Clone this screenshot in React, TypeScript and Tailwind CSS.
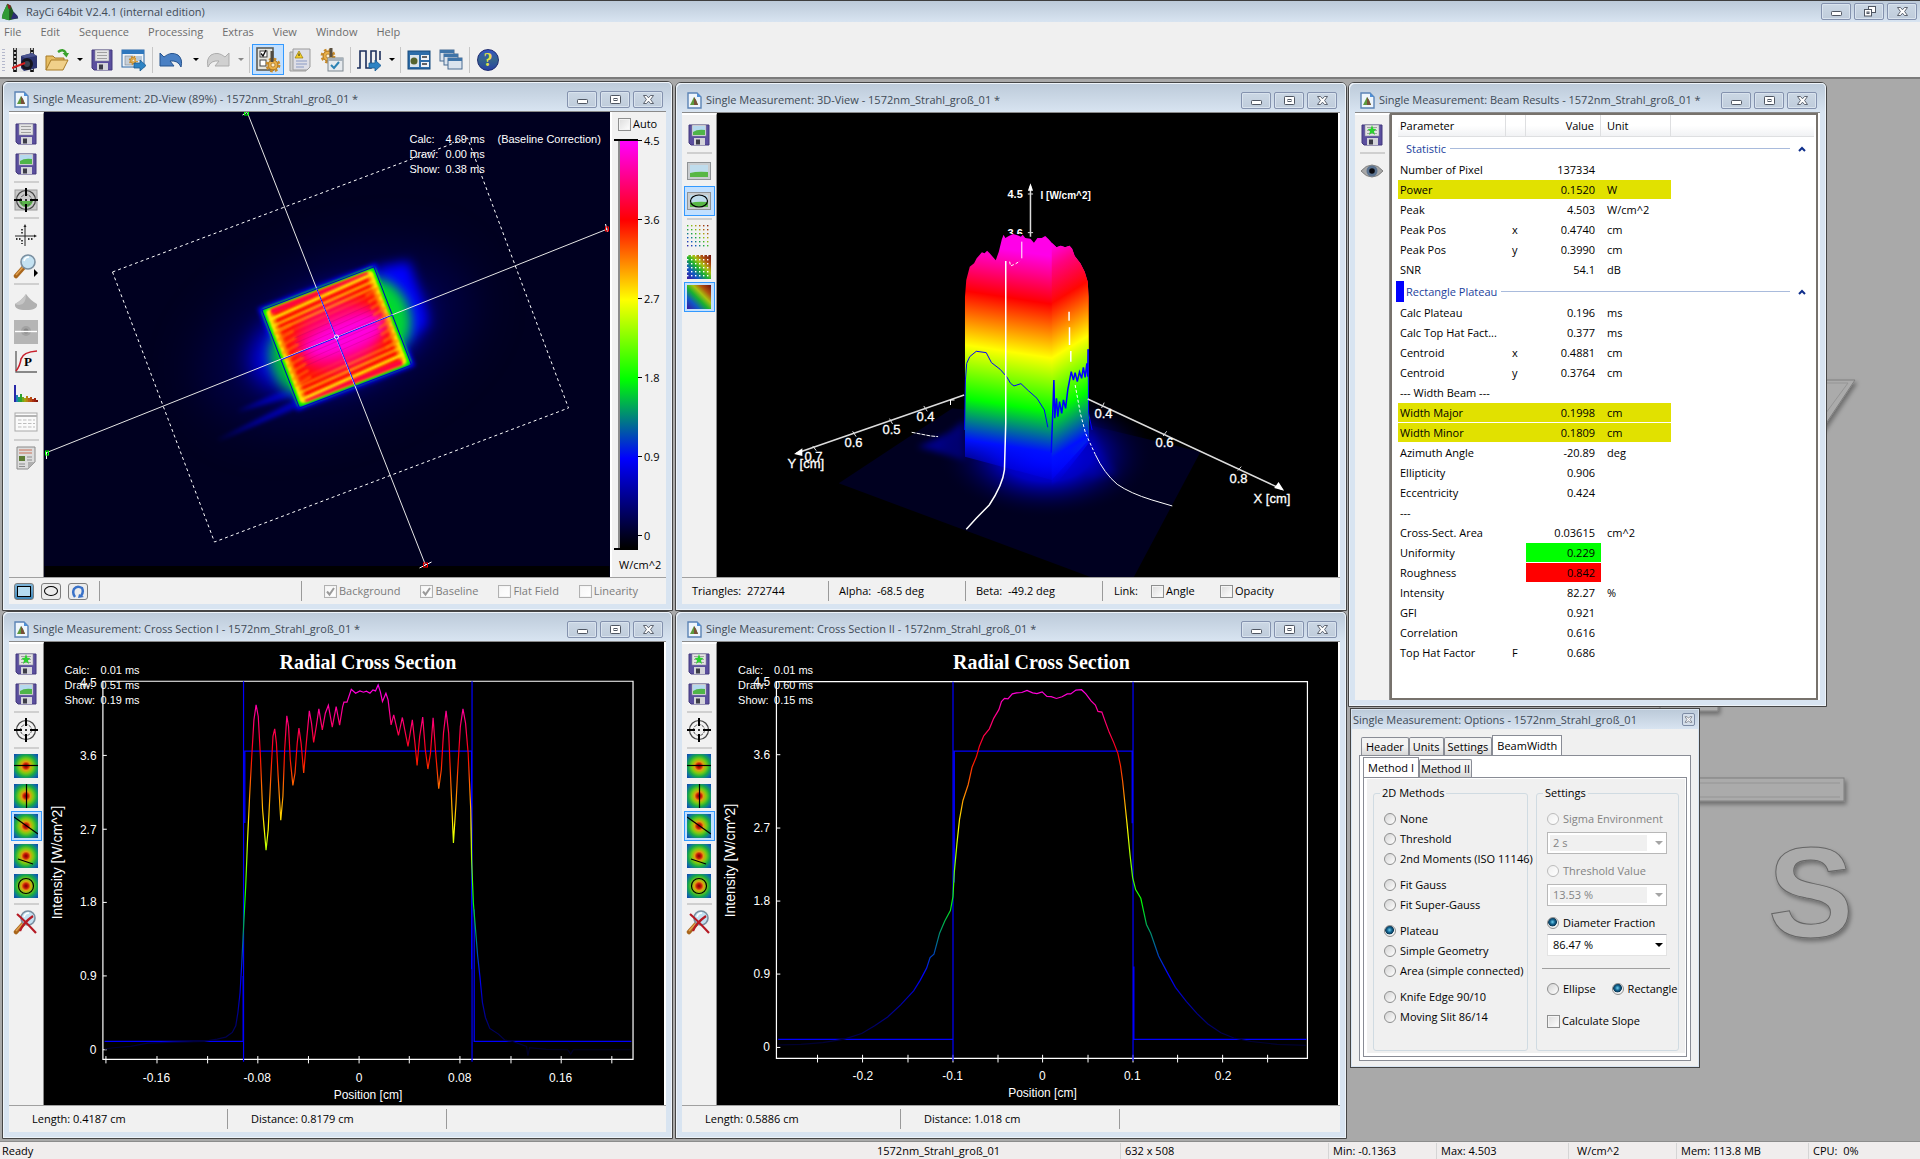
import React from "react";

const UI = "font-['Open_Sans','Noto_Sans',sans-serif]";

/* ---------- small drawings ---------- */

function AppCone({ size = 22 }: { size?: number }) {
  return (
    <svg width={size} height={size} viewBox="0 0 22 22" aria-hidden="true">
      <path d="M8 2 L12 4 L15 11 L19 15 L20 18 L10 20 L2 18 L3 13 Z" fill="#1f5a22" />
      <path d="M8 2 L10 9 L10 20 L2 18 L3 13 Z" fill="#2f9a35" />
      <path d="M15 11 L19 15 L20 18 L12 19 Z" fill="#2c2c74" />
      <path d="M8 2 L12 4 L11 8 L9 7 Z" fill="#8a2020" />
    </svg>
  );
}

function DocIcon() {
  return (
    <svg width="15" height="17" viewBox="0 0 15 17" aria-hidden="true">
      <path d="M1 1 H10 L14 5 V16 H1 Z" fill="#eef5fc" stroke="#5b83b5" strokeWidth="1.4" />
      <path d="M10 1 V5 H14 Z" fill="#4f90d8" />
      <path d="M7 5 L9 8 L11 13 L3 13 L5 9 Z" fill="#5d9a3c" />
      <path d="M7 5 L9 8 L11 13 L7 13 Z" fill="#7a4f38" />
    </svg>
  );
}

function Floppy({ kind = "lines" }: { kind?: "lines" | "pic" | "star" }) {
  return (
    <svg width="22" height="22" viewBox="0 0 22 22" aria-hidden="true">
      <path d="M1 1 H21 V21 H3 L1 19 Z" fill="#5b4f9e" stroke="#43397c" />
      <rect x="4" y="1" width="14" height="11" fill="#e4e4e4" stroke="#8d8d9d" strokeWidth=".6" />
      {kind !== "pic" && <path d="M6 3.5H16M6 6.5H16M6 9.5H16" stroke="#a0a0a0" />}
      {kind === "pic" && (
        <>
          <rect x="5" y="2" width="12" height="9" fill="#b6d9ee" />
          <path d="M5 8 Q9 5 17 6 V11 H5 Z" fill="#4fb549" />
        </>
      )}
      {kind === "star" && (
        <path d="M11 1 L12.3 4.8 L15.5 5 L13 7.2 L14 11 L11 8.8 L8 11 L9 7.2 L6.5 5 L9.7 4.8 Z" fill="#2bd12f" />
      )}
      <rect x="6" y="14" width="11" height="7" fill="#d4d4da" />
      <rect x="8" y="15.5" width="4" height="5" fill="#3c3c48" />
    </svg>
  );
}

function Film() {
  return (
    <svg width="26" height="26" viewBox="0 0 26 26" aria-hidden="true">
      <rect x="1" y="1" width="21" height="24" fill="#e2e2e2" />
      <path d="M3 1V25M20 1V25" stroke="#111" strokeWidth="3.600" />
      <path d="M3 1V25M20 1V25" stroke="#eee" strokeWidth="1.6" strokeDasharray="2 2" />
      <path d="M9 9 L20 6 L25 9 V21 L12 24 L9 21 Z" fill="#2b3370" />
      <path d="M9 9 L20 6 L25 9 L13 11 Z" fill="#4a5490" />
      <circle cx="15" cy="17" r="6" fill="#15151f" />
      <circle cx="15" cy="17" r="3" fill="#3c4252" />
      <path d="M0 21 L13 16" stroke="#d81e1e" strokeWidth="2" />
    </svg>
  );
}

function Folder() {
  return (
    <svg width="26" height="24" viewBox="0 0 26 24" aria-hidden="true">
      <path d="M2 22 V8 H9 L11 10 H20 V13" fill="#e6bd62" stroke="#a77b26" />
      <path d="M2 22 L7 12 H24 L19 22 Z" fill="#f0d08a" stroke="#a77b26" />
      <path d="M14 4 Q19 0 22 5" fill="none" stroke="#3aa22d" strokeWidth="2.4" />
      <path d="M18.500 5 H25 L22.500 9.500 Z" fill="#3aa22d" />
    </svg>
  );
}

function GearShape({ x = 0, y = 0 }: { x?: number; y?: number }) {
  return (
    <g transform={`translate(${x} ${y})`}>
      <circle r="5" fill="#e9b04a" stroke="#a56d15" />
      <circle r="6.200" fill="none" stroke="#c88a28" strokeWidth="2.4" strokeDasharray="2.600 2.270" />
      <circle r="2" fill="#fbeed0" stroke="#a56d15" strokeWidth=".7" />
    </g>
  );
}

function ExportWin() {
  return (
    <svg width="26" height="24" viewBox="0 0 26 24" aria-hidden="true">
      <rect x="1" y="2" width="22" height="17" fill="#eef3f8" stroke="#2a66a5" />
      <rect x="1" y="2" width="22" height="4" fill="#2f77bd" />
      <rect x="4" y="8" width="8" height="9" fill="#c7cfd8" stroke="#7a8592" strokeWidth=".6" />
      <g transform="scale(.62)">
        <GearShape x={20} y={20} />
      </g>
      <rect x="15" y="8" width="6" height="5" fill="#b9c9da" />
      <path d="M13 15 H19 V12 L25 17.500 L19 23 V20 H13 Z" fill="#2d83c4" stroke="#195a90" strokeWidth=".8" />
    </svg>
  );
}

function Undo({ off = false }: { off?: boolean }) {
  const fill = off ? "#d0d0d0" : "#4a80c4";
  const stroke = off ? "#adadad" : "#27548f";
  return (
    <svg width="24" height="20" viewBox="0 0 24 20" aria-hidden="true">
      <g transform={off ? "translate(24 0) scale(-1 1)" : undefined}>
        <path d="M1 3 L5 7 Q12 1 19 5 Q24 9 22 17 Q19 10 11 11 L15 16 H1 Z" fill={fill} stroke={stroke} />
      </g>
    </svg>
  );
}

function ChecksGear() {
  return (
    <svg width="26" height="26" viewBox="0 0 26 26" aria-hidden="true">
      <rect x="2" y="1" width="16" height="22" fill="#e4e4de" stroke="#5d5d58" strokeWidth="1.6" />
      <rect x="5" y="4" width="7" height="6" fill="#fff" stroke="#444" />
      <rect x="5" y="13" width="6" height="6" fill="#fff" stroke="#444" />
      <path d="M6 6.500 L8 9 L11 3" fill="none" stroke="#111" strokeWidth="1.400" />
      <GearShape x={18} y={18} />
      <path d="M17 4V15" stroke="#4f4a40" strokeWidth="3" />
    </svg>
  );
}

function DocWarn() {
  return (
    <svg width="24" height="24" viewBox="0 0 24 24" aria-hidden="true">
      <path d="M2 4 H18 V23 H2 Z" fill="#d0d0d0" stroke="#9b9b9b" />
      <path d="M5 1 H22 V19 L19 22 H5 Z" fill="#dedee6" stroke="#9b9b9b" />
      <path d="M11 3 L15 10 H7 Z" fill="#f4cf2a" stroke="#9a7c08" strokeWidth=".7" />
      <path d="M11 5.500 V8" stroke="#222" />
      <path d="M8 13H19M8 16H19M8 19H16" stroke="#8a9ac4" />
    </svg>
  );
}

function GearCheck() {
  return (
    <svg width="24" height="24" viewBox="0 0 24 24" aria-hidden="true">
      <GearShape x={8} y={8} />
      <path d="M11 0V9" stroke="#5b5040" strokeWidth="3" />
      <rect x="8" y="10" width="15" height="13" fill="#e6eaee" stroke="#7c8790" />
      <rect x="8" y="10" width="15" height="3" fill="#a6b1bb" />
      <path d="M11 17 L14 20 L19 14" fill="none" stroke="#2d83b4" strokeWidth="2" />
    </svg>
  );
}

function Pulses() {
  return (
    <svg width="26" height="24" viewBox="0 0 26 24" aria-hidden="true">
      <path d="M1 20 H4 V3 H10 V20 H15 V3 H20 V14 M24 3 V12" fill="none" stroke="#1c2f5c" strokeWidth="1.600" />
      <path d="M13 15 H19 V12 L25 17.500 L19 23 V20 H13 Z" fill="#2d83c4" stroke="#195a90" strokeWidth=".8" />
    </svg>
  );
}

function TileWins() {
  return (
    <svg width="24" height="20" viewBox="0 0 24 20" aria-hidden="true">
      <rect x="1" y="1" width="22" height="18" fill="#2d6da9" stroke="#174a7d" />
      <rect x="3" y="5" width="9" height="12" fill="#dbe4ec" />
      <circle cx="7" cy="11" r="3.500" fill="#56642f" />
      <rect x="14" y="5" width="8" height="5" fill="#eef2f6" />
      <rect x="14" y="12" width="8" height="5" fill="#eef2f6" />
      <path d="M15 7H20M15 14H20" stroke="#333" strokeWidth="1.500" />
    </svg>
  );
}

function Cascade() {
  return (
    <svg width="24" height="24" viewBox="0 0 24 24" aria-hidden="true">
      {[0, 4, 8].map((o) => (
        <g key={o}>
          <rect x={1 + o} y={2 + o} width="14" height="11" fill="#dbe4ee" stroke="#4b6d92" />
          <rect x={1 + o} y={2 + o} width="14" height="3" fill="#3f74a8" />
        </g>
      ))}
    </svg>
  );
}

function Help() {
  return (
    <span className="flex h-[22px] w-[22px] items-center justify-center rounded-full border border-[#1e2c70] bg-linear-to-b from-[#3350c4] via-[#35648c] to-[#2a3fa4] font-['Liberation_Serif',serif] text-[18px] leading-none font-bold text-[#e4e04a]">
      ?
    </span>
  );
}

function Target({ pic = false }: { pic?: boolean }) {
  return (
    <svg width="24" height="24" viewBox="0 0 24 24" aria-hidden="true">
      {pic && (
        <>
          <rect x="1" y="2" width="22" height="20" fill="#c9c9c9" stroke="#9a9a9a" />
          <path d="M5 13 H19 Q17 19 12 19 Q7 19 5 13Z" fill="#59b648" />
        </>
      )}
      <circle cx="12" cy="12" r="9.500" fill="none" stroke="#444" strokeWidth="1.200" />
      <circle cx="12" cy="12" r="5.500" fill="none" stroke="#555" strokeWidth="1" strokeDasharray="3 1" />
      <path d="M12 0V8M12 16V24M0 12H8M16 12H24" stroke="#000" strokeWidth="2" />
      <circle cx="12" cy="12" r="1" fill="#000" />
    </svg>
  );
}

function Axes() {
  return (
    <svg width="24" height="24" viewBox="0 0 24 24" aria-hidden="true">
      <path d="M1 12H21M11 2V22" stroke="#222" />
      <path d="M20 10.500 L23 12 L20 13.500ZM9.500 3 L11 0 L12.500 3Z" fill="#222" />
      <path d="M2 15H8M14 15H20M8 5V10M8 16V20" stroke="#333" strokeWidth="1.800" strokeDasharray="1.500 1.500" />
    </svg>
  );
}

function Loupe({ crossed = false }: { crossed?: boolean }) {
  return (
    <svg width="26" height="26" viewBox="0 0 26 26" aria-hidden="true">
      <path d="M3 23 L11 14" stroke="#a9661c" strokeWidth="4.500" strokeLinecap="round" />
      <path d="M3 22 L10 14" stroke="#e0a050" strokeWidth="1.500" />
      <circle cx="15" cy="9" r="7" fill="#c4e2f2" stroke="#7a8fa0" strokeWidth="1.600" />
      <path d="M11 8 Q12 4 16 4" stroke="#fff" strokeWidth="1.600" fill="none" />
      {!crossed && <path d="M21 16 L25 20 L21 24Z" fill="#000" />}
      {crossed && <path d="M4 5 Q12 12 23 24 M20 7 Q10 14 7 22" stroke="#b51a24" strokeWidth="2.200" fill="none" />}
    </svg>
  );
}

function Hill() {
  return (
    <svg width="24" height="18" viewBox="0 0 24 18" aria-hidden="true">
      <path d="M12 1 Q16 7 23 11 Q24 17 12 17 Q0 17 1 11 Q8 7 12 1Z" fill="#b0b0b0" />
      <path d="M12 1 Q8 7 1 11 Q12 15 12 1Z" fill="#c6c6c6" />
    </svg>
  );
}

function GraySpot() {
  return (
    <svg width="24" height="24" viewBox="0 0 24 24" aria-hidden="true">
      <rect width="24" height="24" fill="#b5b5b5" />
      <circle cx="12" cy="11" r="5" fill="#a2a2a2" />
      <circle cx="12" cy="11" r="2.500" fill="#858585" />
      <path d="M1 11.500H23" stroke="#fff" strokeWidth="1.400" />
    </svg>
  );
}

function PCurve() {
  return (
    <svg width="24" height="24" viewBox="0 0 24 24" aria-hidden="true">
      <path d="M2 1V22H23" fill="none" stroke="#666" strokeWidth="1.400" />
      <path d="M2 21 Q6 16 7 9 Q9 2 23 1" fill="none" stroke="#c8202c" strokeWidth="1.600" />
      <text x="10" y="16" fontSize="13" fontWeight="bold" fontFamily="Liberation Serif, serif">P</text>
    </svg>
  );
}

function Histogram() {
  const bars = [17, 7, 5, 8, 5, 4, 6, 4, 5, 3, 4, 2];
  const colors = ["#2828a8", "#1f7fb5", "#19a06a", "#2fa32c", "#72a81c", "#a8a010", "#b98212", "#bb6212", "#b84a12", "#a83010", "#98200e", "#80140c"];
  return (
    <svg width="24" height="20" viewBox="0 0 24 20" aria-hidden="true">
      {bars.map((h, i) => (
        <rect key={i} x={i * 2} y={20 - h} width="2" height={h} fill={colors[i]} />
      ))}
    </svg>
  );
}

function Sheet() {
  return (
    <svg width="24" height="20" viewBox="0 0 24 20" aria-hidden="true">
      <rect x="1" y="1" width="22" height="18" fill="#fafafa" stroke="#a9a9a9" />
      <path d="M1 4H23" stroke="#b5b5b5" strokeWidth="2" />
      <path d="M4 8H21M4 11.500H21M4 15H21" stroke="#bdbdbd" strokeDasharray="3.500 1.500" />
    </svg>
  );
}

function Report() {
  return (
    <svg width="20" height="24" viewBox="0 0 20 24" aria-hidden="true">
      <path d="M1 1 H19 V16 L12 23 H1 Z" fill="#dcdcdc" stroke="#8a8a8a" />
      <path d="M19 16 H12 V23Z" fill="#b0b0b0" />
      <path d="M3 4H16M3 7H16" stroke="#cf9484" strokeWidth="1.600" />
      <rect x="3" y="10" width="6" height="5" fill="#5c7c34" />
      <path d="M11 11H16M11 14H16M3 18H9M3 20.500H9" stroke="#8d8d8d" />
    </svg>
  );
}

function Picture({ oval = false }: { oval?: boolean }) {
  return (
    <svg width="24" height="18" viewBox="0 0 24 18" aria-hidden="true">
      <rect x=".5" y=".5" width="23" height="17" fill="#c9cdd0" stroke="#8f9396" />
      <rect x="3" y="3" width="18" height="12" fill="#bfdcec" />
      <path d="M3 11 Q10 9 21 10 V15 H3Z" fill="#58b745" />
      {oval && <ellipse cx="12" cy="9" rx="8.500" ry="6" fill="none" stroke="#000" strokeWidth="1.200" />}
    </svg>
  );
}

function Rainbow({ kind }: { kind: "dots" | "mesh" | "solid" }) {
  const id = `rainbow-${kind}`;
  return (
    <svg width="24" height="24" viewBox="0 0 24 24" aria-hidden="true">
      <defs>
        <linearGradient id={id} x1="0" y1="1" x2="1" y2="0">
          <stop offset="0" stopColor="#3a16a0" />
          <stop offset=".25" stopColor="#1158c4" />
          <stop offset=".45" stopColor="#18b030" />
          <stop offset=".62" stopColor="#a8c010" />
          <stop offset=".78" stopColor="#b05010" />
          <stop offset="1" stopColor="#701010" />
        </linearGradient>
        <pattern id={`${id}-p`} width="4" height="4" patternUnits="userSpaceOnUse">
          <rect width="1.400" height="1.400" fill="#fff" />
        </pattern>
        <mask id={`${id}-m`}>
          <rect width="24" height="24" fill={`url(#${id}-p)`} />
        </mask>
      </defs>
      <rect width="24" height="24" fill={`url(#${id})`} mask={kind === "dots" ? `url(#${id}-m)` : undefined} />
      {kind === "mesh" && <rect width="24" height="24" fill={`url(#${id}-p)`} />}
    </svg>
  );
}

function Spot({ mark }: { mark: string }) {
  return (
    <svg width="24" height="24" viewBox="0 0 24 24" aria-hidden="true">
      <defs>
        <radialGradient id="spot" r=".72">
          <stop offset="0" stopColor="#7a0000" />
          <stop offset=".14" stopColor="#c81808" />
          <stop offset=".26" stopColor="#e0a010" />
          <stop offset=".42" stopColor="#7ccc10" />
          <stop offset=".62" stopColor="#18a848" />
          <stop offset=".8" stopColor="#1070a0" />
          <stop offset="1" stopColor="#0c3cb4" />
        </radialGradient>
      </defs>
      <rect width="24" height="24" fill="url(#spot)" />
      <path d={mark} fill="none" stroke="#000" strokeWidth="1.200" />
    </svg>
  );
}

function Eye() {
  return (
    <svg width="22" height="14" viewBox="0 0 22 14" aria-hidden="true">
      <path d="M0 7 Q5 1 11 1 Q17 1 22 7 Q17 13 11 13 Q5 13 0 7Z" fill="#a8a8a8" stroke="#808080" />
      <circle cx="11" cy="7" r="5.500" fill="#5b7390" />
      <circle cx="11" cy="7" r="2.800" fill="#0a0a10" />
    </svg>
  );
}

/* ---------- window chrome ---------- */

type CtlKind = "min" | "max" | "restore" | "close";

function Ctl({ kind, small = false }: { kind: CtlKind; small?: boolean }) {
  return (
    <button
      type="button"
      aria-label={kind}
      className={
        small
          ? "flex h-[13px] w-[13px] items-center justify-center rounded-[2px] border border-[#7d8ca5] bg-[#d5dfea]"
          : "flex h-[17px] w-[30px] items-center justify-center rounded-[2px] border border-[#8492ae] bg-linear-to-b from-[#cbd7e4] to-[#bfccdb] shadow-[inset_0_0_0_1px_#d9e3ee]"
      }
    >
      <svg width={small ? 9 : 13} height={small ? 9 : 11} viewBox="0 0 13 11" aria-hidden="true" fill="#fff" stroke="#4f5662">
        {kind === "min" && <rect x="1.500" y="5.500" width="10" height="4" rx=".8" />}
        {kind === "max" && (
          <>
            <rect x="1.500" y="1.500" width="10" height="8" rx=".8" />
            <rect x="5" y="4.500" width="3" height="2" />
          </>
        )}
        {kind === "restore" && (
          <>
            <rect x="5.500" y=".5" width="7" height="6" />
            <rect x="1.500" y="3.500" width="7" height="6.500" />
            <rect x="4" y="6" width="2" height="1.500" />
          </>
        )}
        {kind === "close" && (
          <path d="M1.500 1.500 H4.500 L6.500 3.800 L8.500 1.500 H11.500 L8.600 5.500 L11.500 9.500 H8.500 L6.500 7.200 L4.500 9.500 H1.500 L4.400 5.500Z" strokeWidth=".9" />
        )}
      </svg>
    </button>
  );
}

function Win({ className, title, children }: { className: string; title: string; children: React.ReactNode }) {
  return (
    <section className={`absolute flex flex-col rounded-t-[6px] border border-[#454545] bg-[#d8e4f1] px-[6px] pb-[6px] shadow-[inset_0_0_0_1px_#eef4fa] ${className}`}>
      <header className="-mx-[6px] flex h-[29px] shrink-0 items-center rounded-t-[5px] bg-linear-to-b from-[#bccad9] to-[#d8e4f1] px-[9px] pt-[5px] shadow-[inset_1px_1px_0_#eef4fa,inset_-1px_0_0_#eef4fa]">
        <span className="flex min-w-0 flex-1 items-center gap-[4px] pl-[2px]">
          <DocIcon />
          <h2 className={`${UI} truncate text-[11px] leading-4 text-[#404a56]`}>{title}</h2>
        </span>
        <span className="flex gap-[3px]">
          <Ctl kind="min" />
          <Ctl kind="max" />
          <Ctl kind="close" />
        </span>
      </header>
      <div className="flex min-h-0 flex-1 flex-col border-t border-[#8a8a8a] bg-[#f1f1f1]">{children}</div>
    </section>
  );
}

type Tool = { name: string; icon: React.ReactNode; on?: boolean; rule?: boolean };

function SideBar({ tools }: { tools: Tool[] }) {
  return (
    <nav className="flex w-[35px] shrink-0 flex-col items-center border-t-2 border-r border-t-white border-r-[#8a8a8a] pt-[5px]">
      {tools.map((t) => (
        <React.Fragment key={t.name}>
          <button
            type="button"
            aria-label={t.name}
            className={
              t.on
                ? "flex h-[30px] w-[31px] items-center justify-center border border-[#3399ff] bg-[#c2e0ff]"
                : "flex h-[30px] w-[31px] items-center justify-center"
            }
          >
            {t.icon}
          </button>
          {t.rule && <span className="my-[2px] h-[2px] w-[25px] bg-[#cfcfcf]" />}
        </React.Fragment>
      ))}
    </nav>
  );
}

function Check({ label, checked = false, disabled = false }: { label: string; checked?: boolean; disabled?: boolean }) {
  return (
    <label className={disabled ? "flex items-center gap-[2px] text-[#7c7c7c]" : "flex items-center gap-[2px]"}>
      <span className="relative flex">
        <input
          type="checkbox"
          defaultChecked={checked}
          disabled={disabled}
          className="peer h-[13px] w-[13px] appearance-none border border-[#8e8f8f] bg-linear-to-br from-[#dcdcdc] to-white shadow-[inset_0_0_0_1px_#f4f4f4] disabled:border-[#b1b1b1] disabled:from-[#f6f6f6]"
        />
        <svg viewBox="0 0 13 13" className="pointer-events-none absolute inset-0 hidden h-[13px] w-[13px] peer-checked:block" aria-hidden="true">
          <path d="M3 6.500 L5.500 9.500 L10 3" fill="none" stroke="#9a9a9a" strokeWidth="2" />
        </svg>
      </span>
      {label}
    </label>
  );
}

/* ---------- colour scale shared by the plots ---------- */

function Spectrum() {
  return (
    <>
      <stop offset="0" stopColor="#ff00ff" />
      <stop offset=".2" stopColor="#ff0000" />
      <stop offset=".4" stopColor="#ffff00" />
      <stop offset=".6" stopColor="#00ff00" />
      <stop offset=".8" stopColor="#0000ff" />
      <stop offset="1" stopColor="#000028" />
    </>
  );
}

/* ---------- 2D view ---------- */

const stripes = [
  [-43, 1, 3], [-36, 0.9, 2], [-30, 0.7, 2], [-24, 0.4, 1], [-18, 0.2, 1],
  [24, 0.25, 1], [30, 0.5, 2], [36, 0.8, 2], [43, 1, 3],
];

function Beam2D() {
  return (
    <svg viewBox="45 112 565 465" className="block h-full w-full bg-[#000020]" role="img" aria-label="Beam profile">
      <defs>
        <filter id="b2" x="-50%" y="-50%" width="200%" height="200%"><feGaussianBlur stdDeviation="2" /></filter>
        <filter id="b1" x="-50%" y="-50%" width="200%" height="200%"><feGaussianBlur stdDeviation="1" /></filter>
        <filter id="b6" x="-50%" y="-50%" width="200%" height="200%"><feGaussianBlur stdDeviation="6" /></filter>
        <filter id="b14" x="-80%" y="-80%" width="260%" height="260%"><feGaussianBlur stdDeviation="12" /></filter>
        <filter id="b30" x="-80%" y="-80%" width="260%" height="260%"><feGaussianBlur stdDeviation="26" /></filter>
      </defs>
      <rect x="45" y="566" width="565" height="11" fill="#000" />
      <g transform="translate(337 337) rotate(-21)">
        <ellipse rx="140" ry="75" fill="#000070" opacity=".55" filter="url(#b30)" />
        <ellipse rx="90" ry="44" fill="#0000ff" filter="url(#b14)" />
        <path d="M60 -50 L95 -45 L90 20 L60 30Z" fill="#0000ff" filter="url(#b6)" />
        <rect x="-63" y="-55" width="126" height="110" fill="#0000ff" filter="url(#b2)" />
        <path d="M-60 44 L-150 54 L-60 52Z M-60 30 L-120 34 L-60 40Z" fill="#0000e0" filter="url(#b2)" opacity=".7" />
        <ellipse cx="50" cy="-4" rx="28" ry="38" fill="#00d830" filter="url(#b6)" />
        <ellipse cx="-52" cy="8" rx="20" ry="32" fill="#00b840" filter="url(#b6)" />
        <rect x="-61" y="-53" width="122" height="106" rx="5" fill="#00f000" filter="url(#b1)" />
        <rect x="-57" y="-50" width="114" height="100" rx="4" fill="#ffe800" filter="url(#b1)" />
        <rect x="-52" y="-48" width="104" height="96" rx="4" fill="#ff1000" filter="url(#b2)" />
        <path d="M-52 -47 H52 M-52 47 H52" stroke="#ff0040" strokeWidth="5" filter="url(#b1)" />
        <ellipse cx="2" rx="44" ry="34" fill="#ff0060" filter="url(#b6)" />
        <ellipse cx="8" cy="2" rx="42" ry="17" fill="#ff00e0" filter="url(#b6)" />
        <g stroke="#ffee00" filter="url(#b1)">
          {stripes.map(([y, o, w]) => (
            <path key={y} d={`M-56 ${y + 3} Q0 ${y} 56 ${y - 3}`} opacity={o} strokeWidth={w} fill="none" />
          ))}
        </g>
        <g stroke="#ff8000" strokeWidth="2" filter="url(#b1)" opacity=".8">
          {[-28, -21, -14, -7, 0, 7, 14, 21, 28].map((y) => (
            <path key={y} d={`M-57 ${y + 3} L-38 ${y} M42 ${y} L57 ${y - 3}`} />
          ))}
        </g>
        <g stroke="#b00060" strokeWidth="1" opacity=".25">
          {[-16, -11, -6, -1, 4, 9, 14].map((y) => (
            <path key={y} d={`M-40 ${y + 2} L42 ${y - 2}`} />
          ))}
        </g>
        <rect x="-60" y="-52" width="120" height="105" fill="none" stroke="#0000c8" />
      </g>
      <g stroke="#e6e6e6" fill="none">
        <path d="M248 113 L426 565 M46 453 L608 229" />
        <path d="M113 272 L468 138 L569 408 L215 542 Z" strokeDasharray="3 3" stroke="#fff" />
        <path d="M317 288 L356 386 M281 360 L393 315" stroke="#1010ff" />
        <path d="M243 115 L248 112 M420 568 L432 562 M47 452 V459 M606 224 L608 232" stroke="#fff" />
        <rect x="245" y="112" width="4" height="3" stroke="#00ff00" />
        <rect x="46" y="451" width="3" height="4" stroke="#00ff00" />
        <rect x="424" y="563" width="4" height="4" stroke="#ff0000" />
        <rect x="606" y="227" width="3" height="4" stroke="#ff0000" />
        <circle cx="337" cy="337" r="2" stroke="#fff" />
      </g>
      <g fill="#fff" fontSize="11" fontFamily="Liberation Sans, sans-serif">
        <text x="410" y="143">Calc:</text><text x="446" y="143">4.69 ms</text><text x="498" y="143">(Baseline Correction)</text>
        <text x="410" y="158">Draw:</text><text x="446" y="158">0.00 ms</text>
        <text x="410" y="173">Show:</text><text x="446" y="173">0.38 ms</text>
      </g>
    </svg>
  );
}

/* ---------- 3D view ---------- */

const crown =
  "M679 650 L682 600 L690 560 L700 550 L706 535 L718 517 L724 520 L730 512 L736 520 L750 541 L757 515 L764 478 L768 464 L772 474 L780 468 L790 462 L800 466 L808 470 L812 464 L818 474 L830 476 L838 488 L846 474 L856 474 L864 468 L872 478 L880 490 L890 502 L900 497 L910 502 L920 497 L926 506 L932 528 L945 550 L955 575 L962 605 L964 650";

function Beam3D() {
  return (
    <svg viewBox="717 113 620 464" className="block h-full w-full bg-black" role="img" aria-label="Beam profile in three dimensions">
      <defs>
        <linearGradient id="faceL" gradientUnits="userSpaceOnUse" x1="779" y1="480" x2="641" y2="1172">
          <stop offset=".04" stopColor="#ff00e8" />
          <stop offset=".12" stopColor="#ff0090" />
          <stop offset=".24" stopColor="#ff0000" />
          <stop offset=".465" stopColor="#ffff00" />
          <stop offset=".6875" stopColor="#00ff00" />
          <stop offset=".86" stopColor="#0010ff" />
          <stop offset="1" stopColor="#0000ff" stopOpacity="0" />
        </linearGradient>
        <linearGradient id="faceR" gradientUnits="userSpaceOnUse" x1="879" y1="500" x2="1230" y2="939">
          <stop offset="0" stopColor="#ff00e0" />
          <stop offset=".09" stopColor="#ff0080" />
          <stop offset=".236" stopColor="#ff0800" />
          <stop offset=".465" stopColor="#ffff00" />
          <stop offset=".694" stopColor="#00ff00" />
          <stop offset=".88" stopColor="#0010ff" />
          <stop offset="1" stopColor="#0000ff" stopOpacity="0" />
        </linearGradient>
        <radialGradient id="glow">
          <stop offset=".1" stopColor="#0000ff" />
          <stop offset=".42" stopColor="#0000d0" stopOpacity=".9" />
          <stop offset=".7" stopColor="#000068" stopOpacity=".6" />
          <stop offset="1" stopColor="#000022" stopOpacity="0" />
        </radialGradient>
        <clipPath id="halfText"><rect x="1000" y="225" width="40" height="9" /></clipPath>
        <filter id="soft" x="-50%" y="-50%" width="200%" height="200%"><feGaussianBlur stdDeviation="9" /></filter>
      </defs>
      <g transform="translate(670 80) scale(.4337 .3333)">
        <path d="M388 1210 L650 985 L964 1035 L1222 1115 L1068 1492 L970 1492 Z" fill="#000020" />
        <path d="M570 1100 L640 1060 L679 1020 V1140 Z M964 1000 L985 1100 L1030 1180 L964 1200Z" fill="#0000b0" opacity=".7" filter="url(#soft)" />
        <ellipse cx="865" cy="1125" rx="250" ry="190" fill="url(#glow)" />
        <path d={`${crown} V1080 L879 1200 L679 1130 Z`} fill="url(#faceL)" />
        <path d="M879 488 L890 502 L900 497 L910 502 L920 497 L926 506 L932 528 L945 550 L955 575 L962 605 L964 650 V1090 L879 1230 Z" fill="url(#faceR)" />
        <g fill="none" stroke="#0000ff">
          <path vectorEffect="non-scaling-stroke" d="M678 1050 L680 900 L683 850 L690 830 L705 814 L728 818 L740 848 L760 868 L775 890 L784 910 L792 918 L808 911 L825 932 L845 955 L862 990 L870 1042" />
          <path vectorEffect="non-scaling-stroke" strokeWidth="1.500" d="M878 1118 L884 900 L886 1015 L890 955 L893 1010 L897 965 L902 1000 L906 960 L911 985 L916 930 L924 875 L929 900 L933 878 L938 905 L943 876 L948 895 L952 862 L956 892 L960 850 L962 890 L963 808" />
          <path vectorEffect="non-scaling-stroke" d="M963 808 L964 1000 L972 1050" />
        </g>
        <g fill="none" stroke="#fff">
          <path vectorEffect="non-scaling-stroke" d="M773 543 V1030 L770 1170 Q766 1215 735 1275 L705 1315 L682 1348" strokeWidth="1.500" />
          <path vectorEffect="non-scaling-stroke" d="M782 545 L784 558 L795 552 L806 543" strokeDasharray="3 2" />
          <path vectorEffect="non-scaling-stroke" d="M810 535 V485" />
          <path vectorEffect="non-scaling-stroke" d="M919 695 V722 M920 742 V795 M923 813 V845" strokeWidth="1.500" />
          <path vectorEffect="non-scaling-stroke" d="M933 915 L945 1000 L957 1060 L980 1125" strokeDasharray="3 2" />
          <path vectorEffect="non-scaling-stroke" d="M980 1125 Q1000 1180 1030 1213 Q1060 1240 1110 1260 L1157 1278" />
          <path vectorEffect="non-scaling-stroke" d="M556 1057 L580 1063 L600 1068 L617 1070" strokeDasharray="4 1" />
        </g>
        <g fill="none" stroke="#dcdcdc">
          <path vectorEffect="non-scaling-stroke" strokeWidth="1.500" d="M677 945 L290 1120 M962 957 L1410 1228 M830 318 V470" />
          <path vectorEffect="non-scaling-stroke" d="M824 342H836M824 458H836M584 978 L592 994M505 1016 L512 1032M420 1054 L428 1070M328 1098 L336 1112M994 984 L1000 968M1136 1068 L1144 1054M1308 1172 L1316 1160" />
        </g>
        <path d="M830 310 L836 332 H824Z M285 1122 L304 1105 L304 1128Z M1415 1232 L1392 1224 L1402 1206Z" fill="#fff" />
      </g>
      <g fill="#fff" fontSize="11" fontWeight="bold" fontFamily="Liberation Sans, sans-serif">
        <text x="1007" y="198">4.5</text>
        <text x="1040" y="199" fontSize="10">I [W/cm^2]</text>
        <text x="1007" y="237" clipPath="url(#halfText)">3.6</text>
      </g>
      <g fill="#fff" stroke="#fff" strokeWidth=".3" fontSize="13" fontFamily="Liberation Sans, sans-serif">
        <text x="916" y="421">0.4</text>
        <text x="882" y="434">0.5</text>
        <text x="844" y="447">0.6</text>
        <text x="804" y="461">0.7</text>
        <text x="787" y="468">Y [cm]</text>
        <text x="1094" y="418">0.4</text>
        <text x="1155" y="447">0.6</text>
        <text x="1229" y="483">0.8</text>
        <text x="1253" y="503">X [cm]</text>
      </g>
      <path d="M950 405 V400 L954 400" stroke="#fff" fill="none" />
    </svg>
  );
}

/* ---------- cross sections ---------- */

type Trace = {
  id: string;
  box: string;
  map: string;
  frame: [number, number, number, number];
  top: number;
  zero: number;
  yTicks: number[];
  xTicks: number[];
  fit: string;
  curve: string;
  title: [number, number];
  yNums: [string, number][];
  yNumX: number;
  xNums: [string, number][];
  xNumY: number;
  xName: [number, number];
  yName: [number, number];
  info: number;
  times: [string, string, string];
};

const crossOne: Trace = {
  id: "t1",
  box: "44 642 620 464",
  map: "translate(0 610) scale(.4337 .3333)",
  frame: [236, 214, 1461, 1351],
  top: 214,
  zero: 1322,
  yTicks: [437, 659, 879, 1100, 1322],
  xTicks: [243, 361, 478, 594, 711, 828, 944, 1061, 1179, 1295, 1412],
  fit: "M561 214 V1358 M1089 214 V1358 M240 1297 H560 V1100 M564 640 V424 H1088 V1080 M1094 900 V1297 H1457",
  curve:
    "240,1320 260,1316 300,1312 340,1302 400,1299 470,1297 500,1290 520,1284 535,1270 543,1250 548,1210 553,1150 557,1060 560,980 566,830 570,700 575,560 580,440 585,330 590,285 595,320 600,440 605,600 613,722 618,660 624,500 629,380 633,357 637,400 641,500 647,632 652,560 656,420 661,318 665,350 669,450 675,527 680,490 685,400 689,355 694,400 700,490 706,400 713,303 718,340 723,398 729,350 735,297 743,360 750,310 757,286 766,352 775,290 783,346 790,290 793,277 800,277 810,238 820,250 830,243 838,247 845,244 853,250 860,240 866,243 872,225 877,245 882,275 890,250 895,270 902,345 908,315 919,377 928,323 935,370 941,410 951,330 957,400 962,467 968,380 975,322 981,420 987,478 993,430 999,324 1005,430 1012,537 1018,480 1023,370 1029,303 1035,370 1040,520 1046,700 1052,580 1056,480 1062,350 1068,297 1074,340 1080,430 1086,600 1088,750 1092,880 1097,960 1102,1040 1107,1100 1113,1180 1120,1225 1130,1258 1150,1275 1165,1293 1185,1298 1215,1312 1218,1340 1222,1316 1260,1321 1310,1322 1317,1335 1323,1322 1456,1322",
  title: [368, 669],
  yNums: [["4.5", 687], ["3.6", 760], ["2.7", 834], ["1.8", 907], ["0.9", 981], ["0", 1055]],
  yNumX: 96,
  xNums: [["-0.16", 156], ["-0.08", 257], ["0", 359], ["0.08", 460], ["0.16", 561]],
  xNumY: 1083,
  xName: [368, 1100],
  yName: [61, 863],
  info: 64,
  times: ["0.01 ms", "0.51 ms", "0.19 ms"],
};

const crossTwo: Trace = {
  id: "t2",
  box: "717 642 620 464",
  map: "translate(670 610) scale(.4337 .3501)",
  frame: [243, 205, 1470, 1283],
  top: 205,
  zero: 1252,
  yTicks: [414, 624, 833, 1042, 1252],
  xTicks: [338, 442, 547, 651, 755, 858, 963, 1067, 1170, 1274, 1378],
  fit: "M651 205 V1290 M1067 205 V1290 M247 1229 H651 M654 780 V404 H1065 V610 M1069 1020 V1229 H1468",
  curve:
    "247,1245 300,1243 350,1238 400,1228 440,1212 470,1190 500,1165 530,1130 560,1090 575,1060 590,1025 598,995 607,985 620,925 632,890 645,860 651,820 654,750 660,670 666,600 674,545 686,500 695,450 705,420 712,390 722,360 735,340 745,310 757,285 763,262 770,253 778,254 788,240 798,237 810,236 822,230 835,237 845,239 857,234 868,247 878,248 890,253 903,248 915,240 923,240 935,229 948,228 958,240 970,260 980,272 986,290 995,292 1003,320 1012,350 1022,378 1032,410 1038,445 1043,490 1048,550 1053,610 1060,700 1066,765 1073,800 1085,825 1098,900 1108,925 1126,990 1145,1035 1165,1080 1190,1120 1215,1155 1240,1185 1270,1210 1300,1225 1340,1235 1400,1243 1466,1246",
  title: [1041, 669],
  yNums: [["4.5", 686], ["3.6", 759], ["2.7", 832], ["1.8", 906], ["0.9", 979], ["0", 1052]],
  yNumX: 769,
  xNums: [["-0.2", 862], ["-0.1", 952], ["0", 1042], ["0.1", 1132], ["0.2", 1223]],
  xNumY: 1081,
  xName: [1042, 1098],
  yName: [734, 861],
  info: 737,
  times: ["0.01 ms", "0.60 ms", "0.15 ms"],
};

function CrossPlot({ t }: { t: Trace }) {
  const [l, tp, r, b] = t.frame;
  return (
    <svg viewBox={t.box} className="block h-full w-full bg-black" role="img" aria-label="Radial cross section">
      <defs>
        <linearGradient id={t.id} gradientUnits="userSpaceOnUse" x1="0" y1={t.top} x2="0" y2={t.zero}>
          <Spectrum />
        </linearGradient>
      </defs>
      <g transform={t.map} fill="none">
        <path vectorEffect="non-scaling-stroke" stroke="#fff" strokeWidth="1.200" d={`M${l} ${tp} H${r} V${b} H${l} Z`} />
        <path vectorEffect="non-scaling-stroke" stroke="#fff" d={t.yTicks.map((y) => `M${l} ${y}h9`).join("")} />
        <path vectorEffect="non-scaling-stroke" stroke="#fff" d={t.xTicks.map((x) => `M${x} ${b - 10}v22`).join("")} />
        <path vectorEffect="non-scaling-stroke" stroke="#0000ff" strokeWidth="1.200" d={t.fit} />
        <polyline vectorEffect="non-scaling-stroke" stroke={`url(#${t.id})`} strokeWidth="1.200" points={t.curve} />
      </g>
      <g fill="#fff" fontSize="12" fontFamily="Liberation Sans, sans-serif">
        {t.yNums.map(([s, y]) => (
          <text key={s} x={t.yNumX} y={y} textAnchor="end">{s}</text>
        ))}
        {t.xNums.map(([s, x]) => (
          <text key={s} x={x} y={t.xNumY} textAnchor="middle">{s}</text>
        ))}
        <text x={t.xName[0]} y={t.xName[1]} textAnchor="middle">Position [cm]</text>
        <text transform={`translate(${t.yName[0]} ${t.yName[1]}) rotate(-90)`} textAnchor="middle" fontSize="14">Intensity [W/cm^2]</text>
      </g>
      <text x={t.title[0]} y={t.title[1]} textAnchor="middle" fill="#fff" fontSize="20" fontWeight="bold" fontFamily="Liberation Serif, serif">Radial Cross Section</text>
      <g fill="#fff" fontSize="11" fontFamily="Liberation Sans, sans-serif">
        {["Calc:", "Draw:", "Show:"].map((s, i) => (
          <React.Fragment key={s}>
            <text x={t.info} y={674 + i * 15}>{s}</text>
            <text x={t.info + 36} y={674 + i * 15}>{t.times[i]}</text>
          </React.Fragment>
        ))}
      </g>
    </svg>
  );
}

const crossTools: Tool[] = [
  { name: "Save results", icon: <Floppy kind="star" /> },
  { name: "Save picture", icon: <Floppy kind="pic" />, rule: true },
  { name: "Centre", icon: <Target />, rule: true },
  { name: "Horizontal section", icon: <Spot mark="M0 11.500H24" /> },
  { name: "Vertical section", icon: <Spot mark="M12.500 0V24" /> },
  { name: "Radial section", icon: <Spot mark="M0 3 L24 20" />, on: true },
  { name: "Free section", icon: <Spot mark="M4 15 L19 20" /> },
  { name: "Ring section", icon: <Spot mark="M4.500 12 A7.500 7.500 0 1 0 19.500 12 A7.500 7.500 0 1 0 4.500 12" />, rule: true },
  { name: "Reset zoom", icon: <Loupe crossed /> },
];

function CrossWin({ className, title, trace, length, distance }: { className: string; title: string; trace: Trace; length: string; distance: string }) {
  return (
    <Win className={className} title={title}>
      <div className="flex min-h-0 flex-1">
        <SideBar tools={crossTools} />
        <div className="min-w-0 flex-1 overflow-hidden">
          <CrossPlot t={trace} />
        </div>
        <span className="w-[2px] bg-white" />
      </div>
      <footer className="flex h-[27px] shrink-0 items-center border-t border-[#a0a0a0] py-[3px] text-[11px]">
        <span className="flex h-full w-[219px] items-center border-r border-[#9a9a9a] pl-[23px]">Length: {length}</span>
        <span className="flex h-full w-[219px] items-center border-r border-[#9a9a9a] pl-[23px]">Distance: {distance}</span>
      </footer>
    </Win>
  );
}

/* ---------- beam results ---------- */

type Row = { p: string; a?: string; v?: string; u?: string; mark?: "row" | "green" | "red" };

const statistic: Row[] = [
  { p: "Number of Pixel", v: "137334" },
  { p: "Power", v: "0.1520", u: "W", mark: "row" },
  { p: "Peak", v: "4.503", u: "W/cm^2" },
  { p: "Peak Pos", a: "x", v: "0.4740", u: "cm" },
  { p: "Peak Pos", a: "y", v: "0.3990", u: "cm" },
  { p: "SNR", v: "54.1", u: "dB" },
];

const plateau: Row[] = [
  { p: "Calc Plateau", v: "0.196", u: "ms" },
  { p: "Calc Top Hat Fact...", v: "0.377", u: "ms" },
  { p: "Centroid", a: "x", v: "0.4881", u: "cm" },
  { p: "Centroid", a: "y", v: "0.3764", u: "cm" },
  { p: "--- Width Beam ---" },
  { p: "Width Major", v: "0.1998", u: "cm", mark: "row" },
  { p: "Width Minor", v: "0.1809", u: "cm", mark: "row" },
  { p: "Azimuth Angle", v: "-20.89", u: "deg" },
  { p: "Ellipticity", v: "0.906" },
  { p: "Eccentricity", v: "0.424" },
  { p: "---" },
  { p: "Cross-Sect. Area", v: "0.03615", u: "cm^2" },
  { p: "Uniformity", v: "0.229", mark: "green" },
  { p: "Roughness", v: "0.842", mark: "red" },
  { p: "Intensity", v: "82.27", u: "%" },
  { p: "GFI", v: "0.921" },
  { p: "Correlation", v: "0.616" },
  { p: "Top Hat Factor", a: "F", v: "0.686" },
];

function GroupRow({ label, marked = false }: { label: string; marked?: boolean }) {
  return (
    <tr>
      <th colSpan={5} scope="rowgroup" className="h-[23px] p-0 font-normal">
        <span className="-ml-[2px] flex items-center pr-[8px] text-[#1c3f9c]">
          {marked ? <span className="h-[21px] w-2 bg-[#0000ff]" /> : <span className="w-2" />}
          <span className="mr-1 ml-[2px]">{label}</span>
          <span className="h-px flex-1 bg-[#a9bbdc]" />
          <svg width="8" height="6" viewBox="0 0 8 6" className="ml-[8px]" aria-hidden="true">
            <path d="M1 5 L4 2 L7 5" fill="none" stroke="#0f2f8c" strokeWidth="2" />
          </svg>
        </span>
      </th>
    </tr>
  );
}

function Rows({ rows }: { rows: Row[] }) {
  return (
    <>
      {rows.map((r, i) => {
        const cell = r.mark === "row" ? "h-5 border-b border-white bg-[#e1e100] p-0 whitespace-nowrap" : "h-5 border-b border-white p-0 whitespace-nowrap";
        const value =
          r.mark === "row" ? "bg-[#e1e100]" : r.mark === "green" ? "bg-[#00ff00]" : r.mark === "red" ? "bg-[#ff0000]" : "";
        return (
          <tr key={i}>
            <td className={cell}><span className="block pl-[2px] text-left">{r.p}</span></td>
            <td className={cell}><span className="block pl-[6px] text-left">{r.a}</span></td>
            <td className={`h-5 border-b border-white p-0 ${value}`}><span className="block pr-[6px] text-right">{r.v}</span></td>
            <td className={cell}><span className="block pl-[6px] text-left">{r.u}</span></td>
            <td className="p-0" />
          </tr>
        );
      })}
    </>
  );
}

function Results() {
  const head = "h-[22px] border-r border-b border-[#dedfe1] bg-linear-to-b from-white from-50% to-[#f1f2f4] p-0 font-normal";
  return (
    <Win className="top-[3px] left-[1348px] h-[625px] w-[479px]" title="Single Measurement: Beam Results - 1572nm_Strahl_groß_01 *">
      <div className="flex min-h-0 flex-1">
        <SideBar
          tools={[
            { name: "Save results", icon: <Floppy kind="star" />, rule: true },
            { name: "Visible rows", icon: <Eye /> },
          ]}
        />
        <div className="min-w-0 flex-1 overflow-hidden border-2 border-[#77726c] bg-white pr-[2px] pl-[6px]">
          <table className="w-full table-fixed border-separate border-spacing-0 text-[11px] leading-[18px]">
            <colgroup>
              <col className="w-[108px]" />
              <col className="w-[20px]" />
              <col className="w-[75px]" />
              <col className="w-[70px]" />
              <col />
            </colgroup>
            <thead>
              <tr>
                <th className={head}><span className="block pl-[2px] text-left">Parameter</span></th>
                <th className={head} aria-label="Axis" />
                <th className={head}><span className="block pr-[6px] text-right">Value</span></th>
                <th className={head}><span className="block pl-[6px] text-left">Unit</span></th>
                <th className="h-[22px] border-b border-[#dedfe1] bg-linear-to-b from-white from-50% to-[#f1f2f4] p-0" />
              </tr>
            </thead>
            <tbody>
              <GroupRow label="Statistic" />
              <Rows rows={statistic} />
            </tbody>
            <tbody>
              <GroupRow label="Rectangle Plateau" marked />
              <Rows rows={plateau} />
            </tbody>
          </table>
        </div>
        <span className="w-[2px] bg-white" />
      </div>
    </Win>
  );
}

/* ---------- options ---------- */

function Radio({ name, label, on = false, disabled = false }: { name: string; label: string; on?: boolean; disabled?: boolean }) {
  return (
    <label className={disabled ? "flex h-5 items-center gap-1 whitespace-nowrap text-[#838383]" : "flex h-5 items-center gap-1 whitespace-nowrap"}>
      <input
        type="radio"
        name={name}
        defaultChecked={on}
        disabled={disabled}
        className="h-3 w-3 shrink-0 appearance-none rounded-full border border-[#8e8f8f] bg-linear-to-br from-[#d4d4d4] to-white checked:bg-[radial-gradient(circle_at_45%_40%,#6fd0f0_0,#12628e_30%,#0c3a58_50%,#f2f2f2_58%)] disabled:border-[#bcbcbc] disabled:from-[#eeeeee]"
      />
      {label}
    </label>
  );
}

function Combo({ label, value, disabled = false }: { label: string; value: string; disabled?: boolean }) {
  return (
    <div className="relative h-[22px] w-[120px]">
      <select
        aria-label={label}
        disabled={disabled}
        className={
          disabled
            ? "h-full w-full appearance-none border border-[#b8b8b8] bg-white bg-[linear-gradient(#f0f0f0,#f0f0f0)] bg-[length:97px_16px] bg-[position:2px_2px] bg-no-repeat pl-[5px] text-[11px] leading-4 text-[#838383] opacity-100"
            : "h-full w-full appearance-none border border-[#e3e3e3] border-t-[#abadb3] bg-white pl-[5px] text-[11px] leading-4 text-black"
        }
      >
        <option>{value}</option>
      </select>
      <svg width="8" height="4" viewBox="0 0 8 4" className="pointer-events-none absolute top-[9px] right-[4px]" aria-hidden="true">
        <path d="M0 0H8L4 4Z" fill={disabled ? "#a5a5a5" : "#000"} />
      </svg>
    </div>
  );
}

function Options() {
  const tab = "h-[18px] rounded-t-[2px] border border-b-0 border-[#898c95] bg-linear-to-b from-[#f3f3f3] from-50% to-[#d6d6d6] leading-4";
  const tabOn = "h-[21px] border border-b-0 border-[#898c95] bg-white px-[4px] leading-4";
  return (
    <section className="absolute top-[629px] left-[1350px] flex h-[360px] w-[350px] flex-col border border-[#454545] bg-[#d8e4f1] p-px text-[11px] leading-4">
      <header className="flex h-[19px] shrink-0 items-center justify-between bg-linear-to-b from-[#bccad9] to-[#d8e4f1] pr-[3px] pl-px">
        <h2 className="leading-4 whitespace-nowrap text-[#404a56]">Single Measurement: Options - 1572nm_Strahl_groß_01</h2>
        <Ctl kind="close" small />
      </header>
      <div className="flex min-h-0 flex-1 flex-col bg-[#f0f0f0] px-[7px] pt-[6px] pb-[5px]">
        <div className="flex items-end pl-[2px]" role="tablist">
          <button type="button" role="tab" className={`${tab} px-[4px]`}>Header</button>
          <button type="button" role="tab" className={`${tab} px-[3px]`}>Units</button>
          <button type="button" role="tab" className={`${tab} px-[3px]`}>Settings</button>
          <button type="button" role="tab" aria-selected="true" className={`${tabOn} -mb-px`}>BeamWidth</button>
        </div>
        <div className="flex min-h-0 flex-1 flex-col border border-[#898c95] bg-white px-[3px] pt-px pb-[3px]">
          <div className="flex items-end" role="tablist">
            <button type="button" role="tab" aria-selected="true" className={`${tabOn} -mb-px`}>Method I</button>
            <button type="button" role="tab" className={`${tab} px-px`}>Method II</button>
          </div>
          <div className="flex min-h-0 flex-1 border border-[#898c95] bg-white p-[3px] pt-px">
            <div className="flex min-h-0 flex-1 gap-[8px] bg-[#f0f0f0] px-[6px] pt-[6px]">
              <fieldset className="h-[266px] w-[155px] min-w-0 rounded-[3px] border border-[#d0dbe2] pl-[10px]">
                <legend className="-ml-[4px] px-[2px]">2D Methods</legend>
                <div className="flex flex-col gap-[6px] pt-[8px]">
                  <div>
                    <Radio name="m" label="None" />
                    <Radio name="m" label="Threshold" />
                    <Radio name="m" label="2nd Moments (ISO 11146)" />
                  </div>
                  <div>
                    <Radio name="m" label="Fit Gauss" />
                    <Radio name="m" label="Fit Super-Gauss" />
                  </div>
                  <div>
                    <Radio name="m" label="Plateau" on />
                    <Radio name="m" label="Simple Geometry" />
                    <Radio name="m" label="Area (simple connected)" />
                  </div>
                  <div>
                    <Radio name="m" label="Knife Edge 90/10" />
                    <Radio name="m" label="Moving Slit 86/14" />
                  </div>
                </div>
              </fieldset>
              <fieldset className="h-[266px] min-w-0 flex-1 rounded-[3px] border border-[#d0dbe2] pl-[10px]">
                <legend className="-ml-[4px] px-[2px]">Settings</legend>
                <div className="flex flex-col pt-[8px]">
                  <Radio name="s" label="Sigma Environment" disabled />
                  <div className="pt-[3px] pb-[7px]"><Combo label="Sigma Environment" value="2 s" disabled /></div>
                  <Radio name="s" label="Threshold Value" disabled />
                  <div className="pt-[3px] pb-[7px]"><Combo label="Threshold Value" value="13.53 %" disabled /></div>
                  <Radio name="s" label="Diameter Fraction" on />
                  <div className="pt-px"><Combo label="Diameter Fraction" value="86.47 %" /></div>
                  <hr className="-ml-[5px] mt-[12px] mb-[10px] w-[128px] border-[#a0a0a0]" />
                  <div className="flex gap-4 whitespace-nowrap">
                    <Radio name="shape" label="Ellipse" />
                    <Radio name="shape" label="Rectangle" on />
                  </div>
                  <div className="pt-[14px]"><Check label="Calculate Slope" /></div>
                </div>
              </fieldset>
            </div>
          </div>
        </div>
      </div>
    </section>
  );
}

/* ---------- main frame ---------- */

function Caret({ off = false }: { off?: boolean }) {
  return (
    <button type="button" aria-label="More" className="flex h-[30px] w-[13px] items-center justify-center">
      <svg width="6" height="3" viewBox="0 0 6 3" aria-hidden="true">
        <path d="M0 0H6L3 3Z" fill={off ? "#888" : "#000"} />
      </svg>
    </button>
  );
}

function Sep() {
  return <span className="mx-[2px] h-[26px] w-px bg-[#c6c6c6]" />;
}

function MainTool({ name, on = false, children }: { name: string; on?: boolean; children: React.ReactNode }) {
  return (
    <button
      type="button"
      aria-label={name}
      className={
        on
          ? "flex h-[31px] w-[32px] items-center justify-center border border-[#3399ff] bg-[#c2e0ff]"
          : "flex h-[31px] w-[32px] items-center justify-center"
      }
    >
      {children}
    </button>
  );
}

const scale = ["4.5", "3.6", "2.7", "1.8", "0.9", "0"];

const sideTools2D: Tool[] = [
  { name: "Save data", icon: <Floppy /> },
  { name: "Save picture", icon: <Floppy kind="pic" />, rule: true },
  { name: "Centre", icon: <Target pic />, rule: true },
  { name: "Axes", icon: <Axes /> },
  { name: "Zoom", icon: <Loupe />, rule: true },
  { name: "3D view", icon: <Hill /> },
  { name: "Cross section", icon: <GraySpot /> },
  { name: "Power curve", icon: <PCurve /> },
  { name: "Histogram", icon: <Histogram /> },
  { name: "Table", icon: <Sheet />, rule: true },
  { name: "Report", icon: <Report /> },
];

const sideTools3D: Tool[] = [
  { name: "Save picture", icon: <Floppy kind="pic" />, rule: true },
  { name: "Whole picture", icon: <Picture /> },
  { name: "Beam only", icon: <Picture oval />, on: true, rule: true },
  { name: "Dots", icon: <Rainbow kind="dots" /> },
  { name: "Mesh", icon: <Rainbow kind="mesh" /> },
  { name: "Surface", icon: <Rainbow kind="solid" />, on: true },
];

export default function App() {
  const shapeBtn = "flex h-[17px] w-[20px] items-center justify-center rounded-[3px] border border-[#7d7d7d]";
  return (
    <div className={`${UI} flex h-screen flex-col overflow-hidden bg-[#f0f0f0] text-[11px] text-black`}>
      <header className="flex h-[22px] shrink-0 items-center justify-between border-t border-[#3e3e3e] bg-linear-to-b from-[#bccad9] to-[#d8e4f1] pr-[3px]">
        <span className="flex items-center gap-[6px]">
          <AppCone size={20} />
          <h1 className="leading-4 text-[#404a56]">RayCi 64bit V2.4.1 (internal edition)</h1>
        </span>
        <span className="flex gap-[3px]">
          <Ctl kind="min" />
          <Ctl kind="restore" />
          <Ctl kind="close" />
        </span>
      </header>

      <nav className="flex h-[20px] shrink-0 items-center gap-[19px] pl-1 leading-4 text-[#6d6d6d]">
        {["File", "Edit", "Sequence", "Processing", "Extras", "View", "Window", "Help"].map((m) => (
          <button type="button" key={m}>{m}</button>
        ))}
      </nav>

      <div className="flex h-[35px] shrink-0 items-center">
        <span className="mr-1 ml-[2px] h-[22px] w-[3px] bg-[repeating-linear-gradient(#b4b8cc_0_1px,transparent_1px_3px)]" />
        <MainTool name="Live mode"><Film /></MainTool>
        <MainTool name="Open"><Folder /></MainTool>
        <Caret />
        <MainTool name="Save"><Floppy /></MainTool>
        <MainTool name="Export"><ExportWin /></MainTool>
        <Sep />
        <MainTool name="Undo"><Undo /></MainTool>
        <span className="w-[2px]" />
        <Caret />
        <MainTool name="Redo"><Undo off /></MainTool>
        <Caret off />
        <Sep />
        <MainTool name="Options" on><ChecksGear /></MainTool>
        <MainTool name="Messages"><DocWarn /></MainTool>
        <MainTool name="Preferences"><GearCheck /></MainTool>
        <Sep />
        <MainTool name="Trigger"><Pulses /></MainTool>
        <Caret />
        <Sep />
        <MainTool name="Tile windows"><TileWins /></MainTool>
        <MainTool name="Cascade windows"><Cascade /></MainTool>
        <Sep />
        <MainTool name="Help"><Help /></MainTool>
      </div>

      <main className="relative min-h-0 flex-1 overflow-hidden border-t-2 border-[#7b7b7b] bg-[#a9a9a9]">
        <svg className="absolute top-0 left-[1340px]" width="560" height="1060" viewBox="1340 79 560 1060" aria-hidden="true">
          <defs>
            <filter id="emboss" x="-20%" y="-20%" width="140%" height="140%">
              <feDropShadow dx="2" dy="3" stdDeviation="2" floodColor="#000" floodOpacity=".35" />
            </filter>
          </defs>
          <g fill="#ababab" stroke="#7e7e7e" filter="url(#emboss)">
            <path d="M1820 380 H1855 L1815 440 H1790 Z" />
            <rect x="1690" y="778" width="154" height="23" />
            <path d="M1660 690 H1718 V711 H1660Z" />
            <text x="1768" y="937" fontSize="128" fontFamily="Liberation Sans, sans-serif" fontWeight="bold" stroke="#666">S</text>
          </g>
          <path d="M1700 783 H1840 M1700 797 H1840 M1826 383 L1848 383 L1806 440" stroke="#959595" fill="none" />
        </svg>

        <Win className="top-[2px] left-[2px] h-[530px] w-[671px]" title="Single Measurement: 2D-View (89%) - 1572nm_Strahl_groß_01 *">
          <div className="flex min-h-0 flex-1">
            <SideBar tools={sideTools2D} />
            <div className="min-w-0 flex-1 overflow-hidden">
              <Beam2D />
            </div>
            <aside className="flex w-[56px] shrink-0 flex-col border-l-2 border-white pt-[4px] leading-4">
              <div className="pl-[6px]"><Check label="Auto" /></div>
              <div className="mt-[7px] ml-[2px] w-[24px] border-t-2 border-black" />
              <div className="flex h-[407px]">
                <div className="ml-[6px] flex w-[20px] flex-col">
                  <div className="flex-1 border-l-2 border-[#8c8c8c] bg-[linear-gradient(#ff00ff_0%,#ff0000_19.5%,#ffff00_39%,#00ff00_58.5%,#0000ff_78%,#000020_97%,#000000_100%)]" />
                </div>
                <ol className="-mt-[8px] flex-1">
                  {scale.map((s) => (
                    <li key={s} className="flex h-[79px] items-start">
                      <span className="mt-[7px] mr-[2px] h-px w-[4px] bg-black" />
                      <span>{s}</span>
                    </li>
                  ))}
                </ol>
              </div>
              <div className="ml-[2px] w-[24px] border-t-2 border-black" />
              <span className="mt-[7px] pl-[7px]">W/cm^2</span>
            </aside>
          </div>
          <footer className="flex h-[27px] shrink-0 items-center border-t border-[#a0a0a0] py-[3px]">
            <span className="flex h-full w-[91px] items-center gap-[7px] border-r border-[#9a9a9a] pl-[5px]">
              <button type="button" aria-label="Rectangle" className={`${shapeBtn} bg-linear-to-b from-[#7db4d8] to-[#3f87b8]`}>
                <span className="h-[11px] w-[14px] border border-black bg-[#b4dcf2]" />
              </button>
              <button type="button" aria-label="Ellipse" className={`${shapeBtn} bg-[#ececec]`}>
                <span className="h-[10px] w-[14px] rounded-[50%] border border-black" />
              </button>
              <button type="button" aria-label="Reset" className={`${shapeBtn} bg-[#ececec]`}>
                <svg width="14" height="13" viewBox="0 0 14 13" aria-hidden="true">
                  <path d="M4 12 Q1 8 3 4 Q6 0 11 3 Q13 7 10 11" fill="none" stroke="#3a72c8" strokeWidth="2.500" />
                  <path d="M8 9 L13 12 L7 13Z" fill="#3a72c8" />
                </svg>
              </button>
            </span>
            <span className="h-full w-[202px] border-r border-[#9a9a9a]" />
            <span className="flex flex-1 items-center justify-between pr-[28px] pl-[22px]">
              <Check label="Background" checked disabled />
              <Check label="Baseline" checked disabled />
              <Check label="Flat Field" disabled />
              <Check label="Linearity" disabled />
            </span>
          </footer>
        </Win>

        <Win className="top-[3px] left-[675px] h-[529px] w-[672px]" title="Single Measurement: 3D-View - 1572nm_Strahl_groß_01 *">
          <div className="flex min-h-0 flex-1">
            <SideBar tools={sideTools3D} />
            <div className="min-w-0 flex-1 overflow-hidden">
              <Beam3D />
            </div>
            <span className="w-[2px] bg-white" />
          </div>
          <footer className="flex h-[27px] shrink-0 items-center border-t border-[#a0a0a0] py-[3px] whitespace-pre">
            <span className="flex h-full w-[147px] items-center border-r border-[#9a9a9a] pl-[10px]">Triangles:  272744</span>
            <span className="flex h-full w-[137px] items-center border-r border-[#9a9a9a] pl-[10px]">Alpha:  -68.5 deg</span>
            <span className="flex h-full w-[137px] items-center border-r border-[#9a9a9a] pl-[10px]">Beta:  -49.2 deg</span>
            <span className="flex items-center pl-[11px]">
              <span className="w-[37px]">Link:</span>
              <span className="w-[69px]"><Check label="Angle" /></span>
              <Check label="Opacity" />
            </span>
          </footer>
        </Win>

        <CrossWin
          className="top-[532px] left-[2px] h-[528px] w-[671px]"
          title="Single Measurement: Cross Section I - 1572nm_Strahl_groß_01 *"
          trace={crossOne}
          length="0.4187 cm"
          distance="0.8179 cm"
        />
        <CrossWin
          className="top-[532px] left-[675px] h-[528px] w-[672px]"
          title="Single Measurement: Cross Section II - 1572nm_Strahl_groß_01 *"
          trace={crossTwo}
          length="0.5886 cm"
          distance="1.018 cm"
        />
        <Results />
        <Options />
      </main>

      <footer className="flex h-[18px] shrink-0 items-center border-t border-[#8c8c8c] bg-[#f0eded] leading-4 whitespace-pre">
        <span className="w-[877px] pl-[2px]">Ready</span>
        <span className="w-[244px] border-r border-[#d5d5d5]">1572nm_Strahl_groß_01</span>
        <span className="w-[208px] border-r border-[#d5d5d5] pl-1">632 x 508</span>
        <span className="w-[108px] border-r border-[#d5d5d5] pl-1">Min: -0.1363</span>
        <span className="w-[132px] border-r border-[#d5d5d5] pl-1">Max: 4.503</span>
        <span className="w-[108px] border-r border-[#d5d5d5] pl-[8px]">W/cm^2</span>
        <span className="w-[132px] border-r border-[#d5d5d5] pl-1">Mem: 113.8 MB</span>
        <span className="flex-1 pl-1">CPU:  0%</span>
      </footer>
    </div>
  );
}
